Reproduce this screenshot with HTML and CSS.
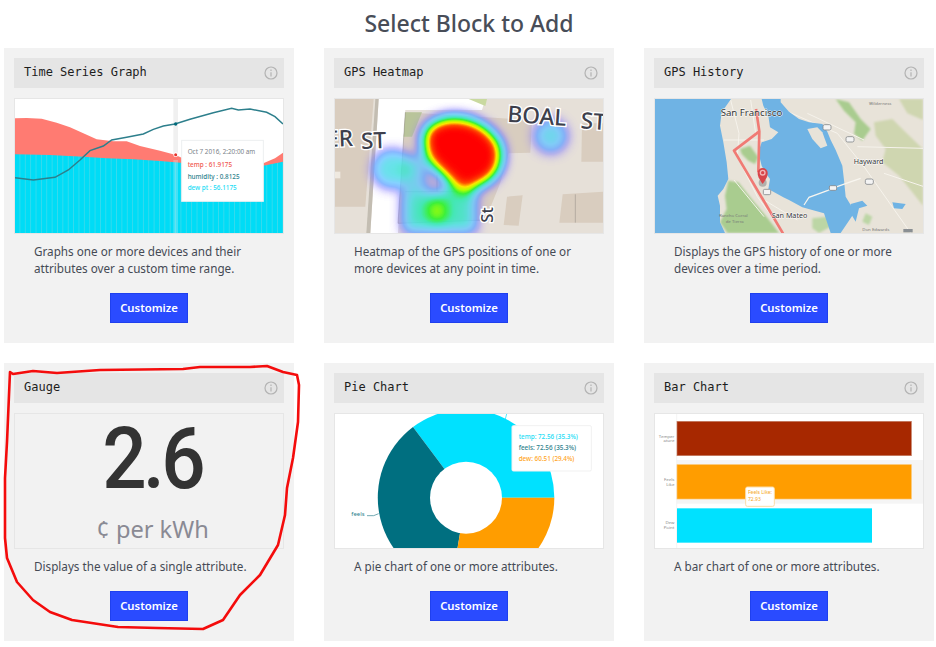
FILE: index.html
```html
<!DOCTYPE html>
<html lang="en">
<head>
<meta charset="utf-8">
<title>Select Block to Add</title>
<link rel="stylesheet" href="styles.css">
</head>
<body>
<main class="page">
  <h1 class="title">Select Block to Add</h1>
  <section class="grid">

    <article class="card">
      <header class="card-head"><span class="card-name">Time Series Graph</span>
        <svg class="info" viewBox="0 0 14 14"><circle cx="7" cy="7" r="6"/><path d="M7 6.2V10.4M7 3.6V5"/></svg></header>
      <div class="preview">
        <svg class="art" viewBox="45 297 804 402" preserveAspectRatio="none">
          <defs>
            <pattern id="stripes" x="45" y="0" width="16.1" height="10" patternUnits="userSpaceOnUse">
              <rect width="16.1" height="10" fill="#00dcf6"/><rect x="13.6" width="1.6" height="10" fill="#5fd9e6"/>
            </pattern>
          </defs>
          <rect x="45" y="297" width="804" height="402" fill="#fff"/>
          <rect x="520" y="297" width="14" height="170" fill="#f0f0f0"/>
          <path fill="#ff7b72" d="M45 355L80 354L125 356L170 368L210 382L250 400L290 418L340 424L380 424L420 438L480 452L525 464L560 480L790 490L825 475L849 458V520H45Z"/>
          <path fill="url(#stripes)" d="M45 463L150 465L250 470L320 475L400 478L480 483L560 490L790 497L849 485V699H45Z"/>
          <rect x="520" y="480" width="14" height="219" fill="#d8f3f7" opacity=".3"/>
          <path fill="none" stroke="#2d7f8c" stroke-width="4.5" d="M45 533L100 540L165 532L205 510L240 480L270 452L310 438L335 420L380 412L430 402L460 388L490 378L525 372L570 358L640 338L695 325L715 330L750 327L800 337L825 350L849 372"/>
          <circle cx="527" cy="372" r="5" fill="#00697a"/>
          <circle cx="527" cy="464" r="7" fill="#fff"/><circle cx="527" cy="464" r="4.5" fill="#e5332b"/>
          <rect x="545" y="421" width="245" height="183" fill="#fff" stroke="#eceff0" stroke-width="3"/>
          <text class="tip tip-date" x="563" y="461">Oct 7 2016, 2:20:00 am</text>
          <text class="tip tip-red" x="563" y="501">temp : 61.9175</text>
          <text class="tip tip-teal" x="563" y="536">humidity : 0.8125</text>
          <text class="tip tip-cyan" x="563" y="571">dew pt : 56.1175</text>
        </svg>
      </div>
      <p class="desc">Graphs one or more devices and their attributes over a custom time range.</p>
      <a class="btn">Customize</a>
    </article>

    <article class="card">
      <header class="card-head"><span class="card-name">GPS Heatmap</span>
        <svg class="info" viewBox="0 0 14 14"><circle cx="7" cy="7" r="6"/><path d="M7 6.2V10.4M7 3.6V5"/></svg></header>
      <div class="preview">
        <svg class="art" viewBox="69 297 804 402" preserveAspectRatio="none">
          <defs>
            <filter id="heatmap" filterUnits="userSpaceOnUse" x="69" y="297" width="804" height="402" color-interpolation-filters="sRGB">
              <feGaussianBlur in="SourceAlpha" stdDeviation="19"/>
              <feColorMatrix type="matrix" values="0 0 0 1 0  0 0 0 1 0  0 0 0 1 0  0 0 0 1 0"/>
              <feComponentTransfer>
                <feFuncR type="table" tableValues="0.6 0.5 0.42 0.4 0.3 0.2 0.2 0.7 1 1 1"/>
                <feFuncG type="table" tableValues="0.5 0.5 0.65 0.78 0.87 0.92 0.95 1 0.9 0.3 0"/>
                <feFuncB type="table" tableValues="1 1 1 1 0.9 0.7 0.2 0 0 0 0"/>
                <feFuncA type="table" tableValues="0 0.45 0.8 0.8 0.85 0.9 0.95 1 1 1 1"/>
              </feComponentTransfer>
            </filter>
          </defs>
          <rect x="69" y="297" width="804" height="402" fill="#e6e0d8"/>
          <path fill="#fff" d="M175 699L200 297H520L510 330L280 330L258 699Z"/>
          <path fill="#c3bdb2" d="M163 699L190 297H200L175 699Z"/>
          <path fill="#d9cdbf" d="M69 297H185L160 620H69Z"/>
          <path fill="#d8cdbf" d="M280 337L660 360L655 458L590 460L565 548L520 660L258 670Z"/>
          <path fill="#b9c49a" d="M280 337H330L300 410H275Z"/>
          <path fill="#d9cdbf" d="M810 370H873V485H808Z"/>
          <path fill="#d9cdbf" d="M585 590L632 586L620 677L575 675Z"/>
          <path fill="#d9cdbf" d="M752 583L873 575V668L742 668Z"/>
          <path fill="#efe9e0" d="M69 515H85V535H69Z"/>
          <path fill="none" stroke="#7a7570" stroke-width="2.5" opacity=".45" d="M280 337L258 670L520 660M375 525V575M280 575H440M790 583V668"/>
          <path fill="#c9d9a0" d="M470 297H525L520 318Z"/>
          <g filter="url(#heatmap)">
            <path d="M333 402C360 332 505 328 565 430C590 512 532 570 445 570C415 537 343 507 333 440Z"/>
            <ellipse cx="240" cy="507" rx="56" ry="55" fill-opacity=".4"/>
            <circle cx="716" cy="408" r="48" fill-opacity=".36"/>
            <path d="M275 470H340V575H275Z" fill-opacity=".32"/>
            <path d="M275 575H490V695H275Z" fill-opacity=".46"/>
            <path d="M400 500H490V585H400Z" fill-opacity=".42"/>
            <ellipse cx="375" cy="632" rx="36" ry="40" fill-opacity=".42"/>
          </g>
          <text class="street" x="585" y="365" transform="rotate(4 585 365)">BOAL</text>
          <text class="street" x="805" y="385" transform="rotate(4 805 385)">ST</text>
          <text class="street" x="43" y="441" transform="rotate(-2 43 441)">ER</text>
          <text class="street" x="148" y="447" transform="rotate(-2 148 447)">ST</text>
          <text class="street street-sm" x="543" y="668" transform="rotate(-90 543 668)">St</text>
        </svg>
      </div>
      <p class="desc">Heatmap of the GPS positions of one or more devices at any point in time.</p>
      <a class="btn">Customize</a>
    </article>

    <article class="card">
      <header class="card-head"><span class="card-name">GPS History</span>
        <svg class="info" viewBox="0 0 14 14"><circle cx="7" cy="7" r="6"/><path d="M7 6.2V10.4M7 3.6V5"/></svg></header>
      <div class="preview">
        <svg class="art" viewBox="93 297 804 402" preserveAspectRatio="none">
          <defs>
            <filter id="soft" filterUnits="userSpaceOnUse" x="93" y="297" width="804" height="402"><feGaussianBlur stdDeviation="2.5"/></filter>
          </defs>
          <rect x="93" y="297" width="804" height="402" fill="#e8e3d9"/>
          <g filter="url(#soft)">
            <path fill="#cfd6b0" d="M750 367L805 357L845 397L897 447V617L865 577L825 527L775 487L785 447L755 407Z"/>
            <path fill="#cfd6b0" d="M825 297H897V360L850 340Z"/>
            <path fill="#a9cc8f" d="M635 297L675 307L710 357L740 387L715 422L690 402L695 367L660 332Z"/>
            <path fill="#a9cc8f" d="M313 542L343 547L383 597L433 657L465 699H310L288 667L308 627L303 587Z"/>
            <path fill="#a9cc8f" d="M348 447L378 437L403 472L393 492L373 482L353 462Z"/>
            <path fill="#bcd6a5" d="M725 640L745 650L735 675L715 665Z"/>
            <path fill="#bcd6a5" d="M565 655L610 650L620 680L585 699L565 685Z"/>
          </g>
          <path fill="none" stroke="#f6f3ec" stroke-width="3" d="M320 300L345 400L340 470L400 590L480 699M380 300L395 400M300 420H420M480 330L640 400L720 500L860 699M700 440L897 445M550 340L720 420M780 520L900 560M420 600L520 660M330 540L420 650"/>
          <path fill="#6fb3e4" d="M93 297H321L293 337L288 377L298 427L308 487L313 537L298 567L281 587L288 617L288 667L303 699H93Z"/>
          <path fill="#6fb3e4" d="M413 297H470V307L495 335L525 357L555 367L595 372L610 395L620 420L635 450L655 497L660 540L665 590L680 615L690 640L650 699H620L600 640L535 622L495 600L478 592L433 567L438 537L423 517L413 497L403 457L413 427L443 417L463 397L438 382L433 347L418 317Z"/>
          <path fill="#e8e3d9" d="M550 387L580 382L595 397L610 437L590 445L565 417Z"/>
          <path fill="#6fb3e4" d="M680 612L715 602L730 617L705 625L695 665L680 640Z"/>
          <path fill="#6fb3e4" d="M805 607L845 612L835 627L810 625Z"/>
          <path fill="none" stroke="#f8f6f0" stroke-width="3.5" d="M540 615L555 592L610 572L625 565L675 547L710 535"/>
          <path fill="none" stroke="#f07a74" stroke-width="8" stroke-linejoin="round" d="M396 327L406 394L330 452L478 702M406 394L403 517"/>
          <circle cx="416" cy="548" r="12" fill="#9a9a98" opacity=".7"/>
          <path fill="#d8454a" d="M416 552C403 534 401 527 401 519A15 15 0 0 1 431 519C431 527 429 534 416 552Z"/>
          <circle cx="416" cy="518" r="9" fill="#f3b5b5"/><circle cx="416" cy="518" r="5" fill="#d8454a"/>
          <text class="map-label" x="290" y="349">San Francisco</text>
          <text class="map-label map-sm" x="689" y="492">Hayward</text>
          <text class="map-label map-sm" x="443" y="654">San Mateo</text>
          <text class="map-faint" x="285" y="651">Rancho Corral</text>
          <text class="map-faint" x="305" y="668">de Tierra</text>
          <text class="map-faint" x="735" y="315">Wilderness</text>
          <text class="map-faint" x="715" y="693">Don Edwards</text>
          <rect x="838" y="687" width="28" height="10" fill="#8a8f93"/>
          <g fill="#f4f4f4" stroke="#85898d" stroke-width="2.5">
            <rect x="597" y="374" width="24" height="16" rx="5"/>
            <rect x="666" y="410" width="24" height="16" rx="5"/>
            <rect x="724" y="537" width="24" height="16" rx="5"/>
            <rect x="616" y="557" width="22" height="14" rx="4"/>
            <rect x="418" y="568" width="22" height="16" rx="4"/>
          </g>
        </svg>
      </div>
      <p class="desc">Displays the GPS history of one or more devices over a time period.</p>
      <a class="btn">Customize</a>
    </article>

    <article class="card">
      <header class="card-head"><span class="card-name">Gauge</span>
        <svg class="info" viewBox="0 0 14 14"><circle cx="7" cy="7" r="6"/><path d="M7 6.2V10.4M7 3.6V5"/></svg></header>
      <div class="preview preview-gauge">
        <div class="gauge-value">2.6</div>
        <div class="gauge-unit">¢ per kWh</div>
      </div>
      <p class="desc">Displays the value of a single attribute.</p>
      <a class="btn">Customize</a>
    </article>

    <article class="card">
      <header class="card-head"><span class="card-name">Pie Chart</span>
        <svg class="info" viewBox="0 0 14 14"><circle cx="7" cy="7" r="6"/><path d="M7 6.2V10.4M7 3.6V5"/></svg></header>
      <div class="preview">
        <svg class="art" viewBox="69 207 804 402" preserveAspectRatio="none">
          <rect x="69" y="207" width="804" height="402" fill="#fff"/>
          <path fill="#00e1ff" d="M727 458A265 265 0 0 0 303 246L462 458Z"/>
          <path fill="#006f80" d="M303 246A265 265 0 0 0 418 719L462 458Z"/>
          <path fill="#ff9d00" d="M727 458A265 265 0 0 1 418 719L462 458Z"/>
          <circle cx="462" cy="458" r="108" fill="#fff"/>
          <path fill="none" stroke="#00e1ff" stroke-width="2" d="M584 207L580 222"/>
          <path fill="none" stroke="#2d7f8c" stroke-width="2" d="M165 512H185L200 506"/>
          <text class="pie-label" x="118" y="512">feels</text>
          <rect x="600" y="242" width="238" height="136" rx="4" fill="#fff" stroke="#f1f1f1" stroke-width="3"/>
          <text class="pie-tip tip-cyan" x="620" y="283">temp: 72.56 (35.3%)</text>
          <text class="pie-tip tip-teal" x="620" y="314">feels: 72.56 (35.3%)</text>
          <text class="pie-tip tip-orange" x="620" y="347">dew: 60.51 (29.4%)</text>
        </svg>
      </div>
      <p class="desc">A pie chart of one or more attributes.</p>
      <a class="btn">Customize</a>
    </article>

    <article class="card">
      <header class="card-head"><span class="card-name">Bar Chart</span>
        <svg class="info" viewBox="0 0 14 14"><circle cx="7" cy="7" r="6"/><path d="M7 6.2V10.4M7 3.6V5"/></svg></header>
      <div class="preview">
        <svg class="art" viewBox="93 207 804 402" preserveAspectRatio="none">
          <rect x="93" y="207" width="804" height="402" fill="#fff"/>
          <rect x="158" y="345" width="739" height="131" fill="#f5f5f5"/>
          <path stroke="#eee" stroke-width="2" d="M158 207V609"/>
          <rect x="159" y="229" width="703" height="103" fill="#a72800" stroke="#c47b60" stroke-width="2"/>
          <rect x="159" y="359" width="703" height="103" fill="#ff9d00" stroke="#fbc36b" stroke-width="2"/>
          <rect x="159" y="490" width="585" height="103" fill="#00e1ff"/>
          <rect x="365" y="426" width="86" height="58" rx="5" fill="#fff" stroke="#fbdca8" stroke-width="3"/>
          <text class="bar-tip" x="372" y="446">Feels Like:</text>
          <text class="bar-tip" x="372" y="469">72.93</text>
          <text class="bar-label" x="151" y="278">Temper</text>
          <text class="bar-label" x="151" y="292">ature</text>
          <text class="bar-label" x="151" y="407">Feels</text>
          <text class="bar-label" x="151" y="423">Like</text>
          <text class="bar-label" x="151" y="538">Dew</text>
          <text class="bar-label" x="151" y="552">Point</text>
        </svg>
      </div>
      <p class="desc">A bar chart of one or more attributes.</p>
      <a class="btn">Customize</a>
    </article>

  </section>
</main>
<svg class="scribble" viewBox="0 0 936 647">
  <path d="M10 372L13 374L33 371L57 373L100 370L183 369L200 367L250 367L267 366L283 372L297 375L299 385L298 422L293 458L287 488L285 515L278 545L260 575L240 595L223 620L203 629L157 628L118 627L72 620L50 612L33 600L17 582L7 558L5 538L5 478L7 442L9 395Z"/>
</svg>
</body>
</html>
```

FILE: styles.css
```css
* { box-sizing: border-box; }

html, body {
  margin: 0;
  background: #fff;
}

body {
  font-family: "Noto Sans", "Open Sans", sans-serif;
  color: #454a55;
}

.page {
  width: 936px;
  height: 647px;
  overflow: hidden;
}

.title {
  margin: 0;
  height: 48px;
  padding-left: 2px;
  padding-bottom: 2px;
  line-height: 46px;
  text-align: center;
  font-size: 23px;
  font-weight: 500;
  color: #484d58;
}

.grid {
  display: grid;
  grid-template-columns: repeat(3, 290px);
  column-gap: 30px;
  row-gap: 20px;
  padding-left: 4px;
  align-items: start;
}

.card {
  display: flex;
  flex-direction: column;
  background: #f2f2f2;
  padding: 10px 10px 20px;
}

.card-head {
  display: flex;
  align-items: center;
  justify-content: space-between;
  height: 30px;
  padding: 0 6px 0 10px;
  background: #e5e5e5;
}

.card-name {
  font-family: "DejaVu Sans Mono", "Liberation Mono", monospace;
  font-size: 12px;
  line-height: 14px;
  padding-bottom: 2px;
  color: #1d1d1d;
}

.info {
  width: 14px;
  height: 14px;
  fill: none;
  stroke: #b3b3b3;
  stroke-width: 1.2;
}

.preview {
  height: 136px;
  margin-top: 10px;
  border: 1px solid #e6e6e6;
  overflow: hidden;
}

.art {
  display: block;
  width: 100%;
  height: 100%;
}

.preview-gauge {
  display: flex;
  flex-direction: column;
  align-items: center;
  padding-left: 7px;
  overflow: visible;
}

.gauge-value {
  font-family: "Roboto", "Inter", sans-serif;
  font-size: 85px;
  line-height: 100px;
  margin-top: -5px;
  letter-spacing: -4px;
  color: #333333;
  font-weight: 500;
  transform: scaleX(.92);
}

.gauge-unit {
  font-size: 23.6px;
  line-height: 30px;
  margin-top: 5px;
  color: #8a8a94;
}

.desc {
  margin: 9px 0 16px;
  padding: 0 20px;
  font-size: 11.7px;
  line-height: 17px;
  color: #454a55;
}

.btn {
  align-self: center;
  display: flex;
  align-items: center;
  justify-content: center;
  width: 78px;
  height: 30px;
  padding-bottom: 2px;
  background: #2a4bff;
  border: 1px solid #1f40ee;
  color: #fff;
  font-size: 11.3px;
  font-weight: 600;
}

.tip { font-family: "Noto Sans", sans-serif; font-size: 19px; }
.tip-date { fill: #7a7f88; }
.tip-red { fill: #f0584f; font-weight: 500; }
.tip-teal { fill: #2d7f8c; font-weight: 500; }
.tip-cyan { fill: #19dcf5; font-weight: 500; }
.tip-orange { fill: #ffa41c; font-weight: 500; }

.street {
  font-family: "Noto Sans", sans-serif;
  font-size: 68px;
  font-weight: 500;
  fill: #3d3f4c;
  stroke: #fff;
  stroke-width: 8px;
  paint-order: stroke;
}

.street-sm { font-size: 50px; }

.map-label {
  font-family: "Noto Sans", sans-serif;
  font-size: 29px;
  fill: #333;
  stroke: #fff;
  stroke-width: 2.5px;
  paint-order: stroke;
}

.map-sm { font-size: 21.5px; }

.map-faint {
  font-family: "Noto Sans", sans-serif;
  font-size: 13px;
  fill: #777;
}

.pie-label {
  font-family: "Noto Sans", sans-serif;
  font-size: 18px;
  fill: #2d7f8c;
}

.pie-tip {
  font-family: "Noto Sans", sans-serif;
  font-size: 19px;
}

.bar-tip {
  font-family: "Noto Sans", sans-serif;
  font-size: 15px;
  fill: #f5a623;
}

.bar-label {
  font-family: "Noto Sans", sans-serif;
  font-size: 13px;
  fill: #888;
  text-anchor: end;
}

.scribble {
  position: absolute;
  left: 0;
  top: 0;
  width: 936px;
  height: 647px;
  fill: none;
  stroke: #f40c0c;
  stroke-width: 2.6;
  stroke-linejoin: round;
  pointer-events: none;
}
```
